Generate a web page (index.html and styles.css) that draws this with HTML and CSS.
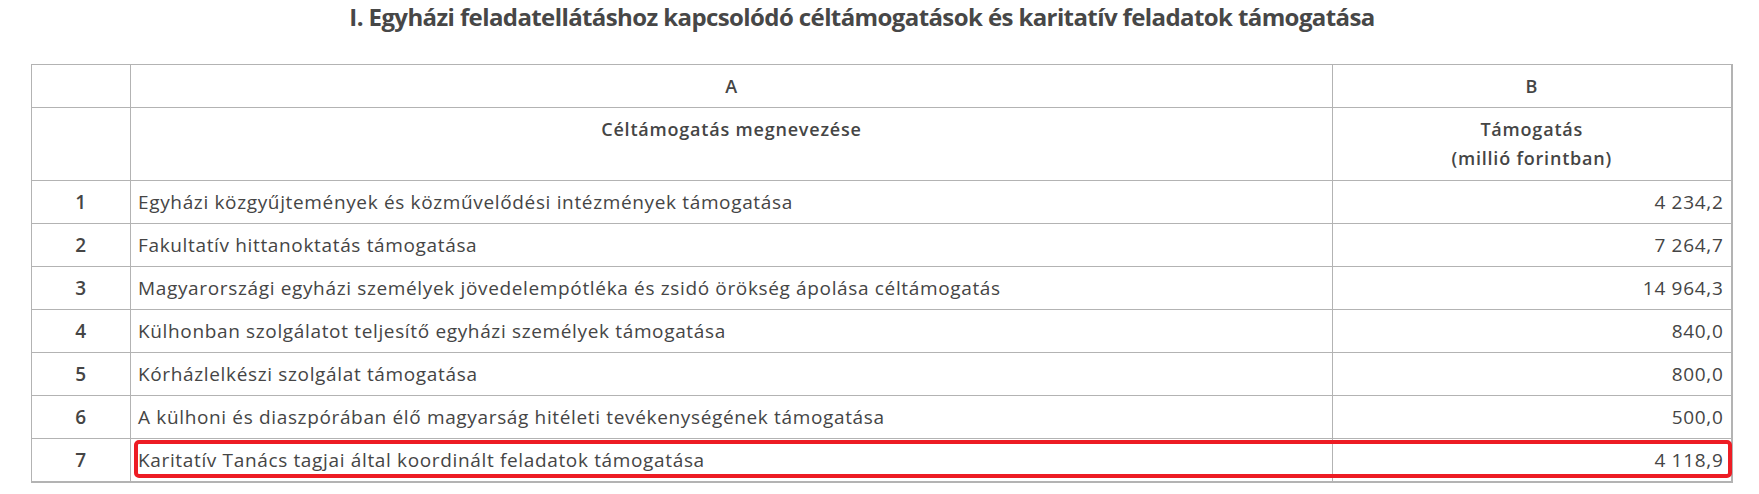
FILE: index.html
```html
<!DOCTYPE html>
<html lang="hu">
<head>
<meta charset="utf-8">
<title>Céltámogatások</title>
<link rel="stylesheet" href="styles.css">
</head>
<body>
<div class="page">
  <h1 class="title">I. Egyházi feladatellátáshoz kapcsolódó céltámogatások és karitatív feladatok támogatása</h1>
  <div class="table-wrap">
    <table class="grid">
      <colgroup>
        <col class="c-num">
        <col class="c-name">
        <col class="c-val">
      </colgroup>
      <tr class="letters">
        <th></th>
        <th>A</th>
        <th>B</th>
      </tr>
      <tr class="heads">
        <th></th>
        <th>Céltámogatás megnevezése</th>
        <th>Támogatás<br>(millió forintban)</th>
      </tr>
      <tr><td class="num">1</td><td class="name">Egyházi közgyűjtemények és közművelődési intézmények támogatása</td><td class="val">4 234,2</td></tr>
      <tr><td class="num">2</td><td class="name">Fakultatív hittanoktatás támogatása</td><td class="val">7 264,7</td></tr>
      <tr><td class="num">3</td><td class="name">Magyarországi egyházi személyek jövedelempótléka és zsidó örökség ápolása céltámogatás</td><td class="val">14 964,3</td></tr>
      <tr><td class="num">4</td><td class="name">Külhonban szolgálatot teljesítő egyházi személyek támogatása</td><td class="val">840,0</td></tr>
      <tr><td class="num">5</td><td class="name">Kórházlelkészi szolgálat támogatása</td><td class="val">800,0</td></tr>
      <tr><td class="num">6</td><td class="name">A külhoni és diaszpórában élő magyarság hitéleti tevékenységének támogatása</td><td class="val">500,0</td></tr>
      <tr><td class="num">7</td><td class="name">Karitatív Tanács tagjai által koordinált feladatok támogatása</td><td class="val">4 118,9</td></tr>
    </table>
    <div class="mark"></div>
  </div>
</div>
</body>
</html>
```

FILE: styles.css
```css
html, body {
  margin: 0;
  padding: 0;
  background: #ffffff;
}

body {
  font-family: "Open Sans", "Noto Sans", sans-serif;
  color: #454545;
}

.page {
  padding: 0 28px 0 31px;
}

.title {
  margin: 0;
  padding: 2px 38px 0 0;
  height: 64px;
  box-sizing: border-box;
  font-size: 24px;
  line-height: 30px;
  font-weight: 700;
  font-stretch: 88%;
  text-align: center;
  color: #474747;
  letter-spacing: -0.6px;
}

.table-wrap {
  position: relative;
  width: 1700px;
}

.grid {
  width: 1700px;
  border-collapse: collapse;
  table-layout: fixed;
  font-size: 19px;
  letter-spacing: 0.65px;
  border-bottom: 2px solid #b3b3b3;
  border-right: 2px solid #b3b3b3;
}

.c-num { width: 99px; }
.c-name { width: 1202px; }
.c-val { width: 399px; }

.grid th,
.grid td {
  border: 1px solid #b3b3b3;
  padding: 0 7px;
}

.grid th {
  font-weight: 600;
  text-align: center;
  font-size: 18px;
  letter-spacing: 0.8px;
}

.letters th {
  height: 42px;
  line-height: 24px;
  vertical-align: middle;
}

.heads th {
  height: 73px;
  box-sizing: border-box;
  vertical-align: top;
  padding-top: 7px;
  line-height: 29px;
}

.grid td {
  height: 42px;
  line-height: 24px;
  vertical-align: middle;
}

.num {
  text-align: center;
  font-weight: 600;
}

.name {
  text-align: left;
}

.val {
  text-align: right;
  letter-spacing: 0.7px;
}

.mark {
  position: absolute;
  left: 103px;
  top: 376px;
  width: 1598px;
  height: 38px;
  box-sizing: border-box;
  border: 4px solid #ed1c24;
  border-radius: 5px;
  pointer-events: none;
}
```
